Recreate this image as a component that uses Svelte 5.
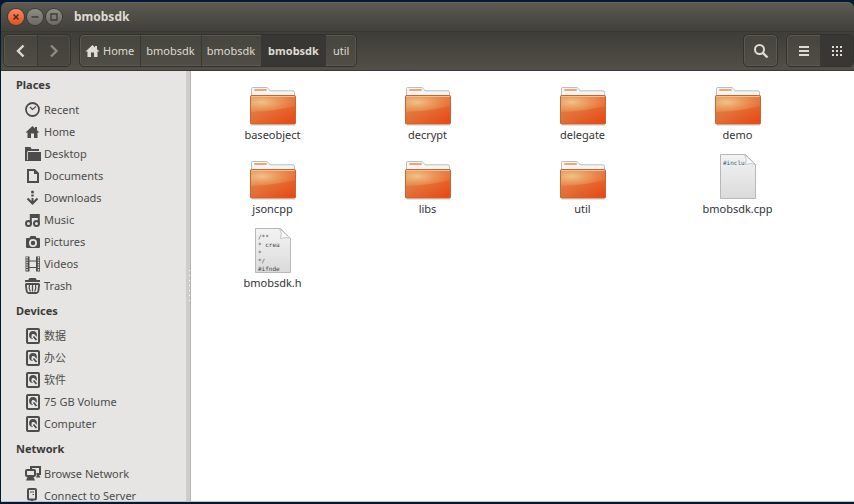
<script>
  const groups = [
    { title: 'Places', items: [
      ['clock', 'Recent'], ['home', 'Home'], ['folder', 'Desktop'], ['doc', 'Documents'],
      ['download', 'Downloads'], ['music', 'Music'], ['camera', 'Pictures'], ['film', 'Videos'], ['trash', 'Trash']
    ] },
    { title: 'Devices', items: [
      ['disk', '数据'], ['disk', '办公'], ['disk', '软件'], ['disk', '75 GB Volume'], ['disk', 'Computer']
    ] },
    { title: 'Network', items: [['network', 'Browse Network'], ['server', 'Connect to Server']] }
  ];
  const crumbs = ['Home', 'bmobsdk', 'bmobsdk', 'bmobsdk', 'util'];
  const current = 3;
  const files = [
    { name: 'baseobject' }, { name: 'decrypt' }, { name: 'delegate' }, { name: 'demo' },
    { name: 'jsoncpp' }, { name: 'libs' }, { name: 'util' },
    { name: 'bmobsdk.cpp', lines: ['#inclu'] },
    { name: 'bmobsdk.h', lines: ['/**', '* crea', '*', '*/', '#ifnde'] }
  ];
</script>

{#snippet icon(name)}
  <svg class="icon" viewBox="0 0 16 16" width="16" height="16" aria-hidden="true">
    {#if name === 'clock'}
      <circle cx="7.500" cy="7.500" r="6.500" fill="none" stroke="currentColor" stroke-width="1.8" />
      <path d="M5 5 7.500 7.500 11 4.500" fill="none" stroke="currentColor" stroke-width="1.2" />
    {:else if name === 'home'}
      <path d="M7.500 2 .5 8.400h2V14h3.500V9.500h3V14h3.500V8.400h2L12 6.200V3h-2v1.400Z" fill="currentColor" />
    {:else if name === 'folder'}
      <path d="M0 1h5.500l1 2H14v2H3v10H0Z" fill="currentColor" />
      <path d="M3 6h13v9H3V6Z" fill="currentColor" />
      <path d="M2.500 5.500V14" stroke="#e6e5e3" stroke-width=".8" />
    {:else if name === 'doc'}
      <path d="M3 2h6.500L13 5.500V14H3Z" fill="none" stroke="currentColor" stroke-width="2" />
      <path d="M9 2v4h4Z" fill="currentColor" />
    {:else if name === 'download'}
      <circle cx="7.500" cy="2" r="1.500" fill="currentColor" />
      <path d="M6.300 4.500h2.400v2H6.300Z" fill="currentColor" />
      <path d="M7.500 8v4M2.500 8.500l5 5 5-5" fill="none" stroke="currentColor" stroke-width="2" />
    {:else if name === 'music'}
      <path d="M5.800 11.500V3h8v8.500M6 5h7.500" fill="none" stroke="currentColor" stroke-width="2" />
      <circle cx="3.500" cy="11.500" r="2.500" fill="none" stroke="currentColor" stroke-width="2" />
      <circle cx="11.500" cy="11.500" r="2.500" fill="none" stroke="currentColor" stroke-width="2" />
    {:else if name === 'camera'}
      <path fill-rule="evenodd" d="M5.500 2h5l1 2H14q1 0 1 1v8q0 1-1 1H2q-1 0-1-1V5q0-1 1-1h2.500ZM8 5a4 4 0 1 0 0 8 4 4 0 0 0 0-8Z" fill="currentColor" />
      <circle cx="8" cy="9" r="2.200" fill="currentColor" />
    {:else if name === 'film'}
      <path d="M2.500 .5v15M13 .5v15" stroke="currentColor" stroke-width="4" />
      <path d="M2 1v14M13.500 1v14" stroke="#e6e5e3" stroke-width="1.400" stroke-dasharray="1.400 1" />
      <path d="M4 5h8M4 11.500h8" stroke="currentColor" stroke-width="1.200" />
    {:else if name === 'trash'}
      <path d="M4 2.500 5 1h5l1 1.500M0 3h15" fill="none" stroke="currentColor" stroke-width="1.800" />
      <path d="M1.500 6h12q.8 0 .5 2l-.5 4q-.4 3-2 3h-8q-1.600 0-2-3L1 8q-.3-2 .5-2Z" fill="none" stroke="currentColor" stroke-width="1.800" />
      <path d="M4.500 6.500q-1 3.500.8 7M7.500 6.500v7M10.500 6.500q1 3.500-.8 7" fill="none" stroke="currentColor" stroke-width="1.200" />
    {:else if name === 'disk'}
      <rect x="2" y="1" width="12" height="14" rx="1" fill="none" stroke="currentColor" stroke-width="2" />
      <circle cx="8" cy="7" r="3.900" fill="currentColor" />
      <path d="M7.500 7.500 11.500 11.500" stroke="#e6e5e3" stroke-width="4" />
      <circle cx="8" cy="7.200" r="1.300" fill="#e6e5e3" />
      <path d="m8.500 8.500 3 3.500" stroke="currentColor" stroke-width="1.800" />
    {:else if name === 'network'}
      <path d="M6 4V1h9v7h-3.500" fill="none" stroke="currentColor" stroke-width="2" />
      <rect x="1" y="4" width="9" height="6" rx="1" fill="#e6e5e3" stroke="currentColor" stroke-width="2" />
      <path d="M2.500 11h6l1.500 3.500H1ZM12 9h2l1.500 2.500H11Z" fill="currentColor" />
    {:else if name === 'server'}
      <rect x="3" y="1" width="8" height="10.500" rx="1" fill="none" stroke="currentColor" stroke-width="2" />
      <path d="M5 4h4M7.500 6.500h1.500" stroke="currentColor" />
      <path d="M7 12v2M3.500 15h7" stroke="currentColor" stroke-width="2" />
    {:else if name === 'back'}
      <path d="M10.500 2.500 5 8l5.500 5.500" fill="none" stroke="currentColor" stroke-width="2.400" />
    {:else if name === 'forward'}
      <path d="M5 2.500 10.500 8 5 13.500" fill="none" stroke="currentColor" stroke-width="2.400" />
    {:else if name === 'search'}
      <circle cx="6.500" cy="6.500" r="4.500" fill="none" stroke="currentColor" stroke-width="2" />
      <path d="m9.800 9.800 4.700 4.700" stroke="currentColor" stroke-width="2.400" />
    {:else if name === 'list'}
      <path d="M3 4h10M3 8h10M3 12h10" stroke="currentColor" stroke-width="2" />
    {:else if name === 'grid'}
      <path d="M3 4h10M3 8h10M3 12h10" stroke="currentColor" stroke-width="2" stroke-dasharray="2 2" />
    {/if}
  </svg>
{/snippet}

<div class="desktop">
  <div class="window">
    <header class="titlebar">
      <button class="wm close" aria-label="Close"><svg width="16" height="16" viewBox="0 0 16 16"><path d="m5.500 5.500 5 5m0-5-5 5" stroke="#56261a" stroke-width="1.500" /></svg></button>
      <button class="wm" aria-label="Minimize"><svg width="16" height="16" viewBox="0 0 16 16"><path d="M4.500 8h7" stroke="#3c3b37" stroke-width="1.300" /></svg></button>
      <button class="wm" aria-label="Maximize"><svg width="16" height="16" viewBox="0 0 16 16"><path d="M5 5h6v6H5Z" fill="none" stroke="#3c3b37" stroke-width="1.300" /></svg></button>
      <h1>bmobsdk</h1>
    </header>
    <div class="toolbar">
      <div class="group">
        <button class="tool" aria-label="Back">{@render icon('back')}</button>
        <button class="tool dim" aria-label="Forward">{@render icon('forward')}</button>
      </div>
      <nav class="group path" aria-label="Path">
        {#each crumbs as crumb, i}
          <button class="crumb" class:active={i === current}>
            {#if i === 0}{@render icon('home')}{/if}<span>{crumb}</span>
          </button>
        {/each}
      </nav>
      <div class="group"><button class="tool" aria-label="Search">{@render icon('search')}</button></div>
      <div class="group views">
        <button class="tool" aria-label="List view">{@render icon('list')}</button>
        <button class="tool active" aria-label="Icon view">{@render icon('grid')}</button>
      </div>
    </div>
    <div class="body">
      <aside>
        {#each groups as group}
          <h2>{group.title}</h2>
          <ul>
            {#each group.items as [glyph, label]}
              <li><a href="#{label}">{@render icon(glyph)}<span>{label}</span></a></li>
            {/each}
          </ul>
        {/each}
      </aside>
      <div class="handle"></div>
      <main>
        {#each files as file}
          <button class="file">
            <svg width="48" height="48" viewBox="0 0 48 48" aria-hidden="true">
              {#if file.lines}
                <path d="M6.500 1.500h25l10 10v34h-35Z" fill="url(#paper)" stroke="#b8b8b8" />
                {#each file.lines as line, i}
                  <text x="9" y={12 + i * 8} class:code={file.lines.length === 1}>{line}</text>
                {/each}
                <path d="M30.500 1.500q3 5 1 10 6-2 10 0Z" fill="#f7f7f7" stroke="#bdbdbd" stroke-width=".8" />
              {:else}
                <path d="M2.500 18V9.500q0-1 1-1H17q1.500 0 2.500 1.300l1.500 2H44q1.500 0 1.500 1.500V18Z" fill="#f5f5f4" stroke="#b9bec0" />
                <path d="M6 11h11" stroke="#f3a47b" stroke-width="2" stroke-linecap="round" />
                <path d="M3 46h43" stroke="#ccc" />
                <rect x="1.500" y="16.500" width="45" height="28.500" rx="1" fill="url(#orange)" stroke="#c56636" />
                <path d="M2 17h44v10Q28 32 2 33Z" fill="url(#shine)" />
                <path d="M2.500 17.500h43" stroke="#f5bd91" />
              {/if}
            </svg>
            <span>{file.name}</span>
          </button>
        {/each}
      </main>
    </div>
  </div>
  <svg class="defs" width="0" height="0" aria-hidden="true">
    <defs>
      <linearGradient id="paper" x2="0" y2="1"><stop stop-color="#f3f3f3" /><stop offset="1" stop-color="#dadada" /></linearGradient>
      <linearGradient id="orange" x2=".8" y2="1"><stop stop-color="#dc8d50" /><stop offset=".55" stop-color="#e36f35" /><stop offset="1" stop-color="#e84b18" /></linearGradient>
      <radialGradient id="shine" cx=".25" cy=".4" r=".75"><stop stop-color="#f7d9a0" stop-opacity=".75" /><stop offset="1" stop-color="#f5a060" stop-opacity=".2" /></radialGradient>
    </defs>
  </svg>
</div>

<style>
  .desktop {
    box-sizing: border-box;
    height: 100vh;
    padding: 2px 0 2px 1px;
    background: #021a33;
    font: 11px/16px "Noto Sans", "Noto Sans CJK SC", sans-serif;
    color: #3c3b37;
    overflow: hidden;
  }
  button { font: inherit; color: inherit; border: 0; margin: 0; padding: 0; background: none; }
  .icon { flex: none; display: block; }
  .defs { position: absolute; }
  .window { height: 100%; display: flex; flex-direction: column; border-radius: 6px 6px 0 0; overflow: hidden; }
  .titlebar {
    flex: none;
    box-sizing: border-box;
    height: 29px;
    display: flex;
    align-items: center;
    gap: 3px;
    padding-left: 7px;
    background: linear-gradient(#5c5a51, #403f3a);
    border-top: 1px solid #6b685e;
    color: #dfdbd2;
  }
  h1 { margin: 0 0 0 9px; font-size: 12px; line-height: 16px; font-weight: 700; }
  .wm { width: 16px; height: 16px; border-radius: 50%; background: linear-gradient(#8f8d85, #6b6962); box-shadow: 0 0 0 1px #3b3a35; }
  .wm svg { display: block; }
  .close { background: linear-gradient(#f58a62, #e2501f); }
  .toolbar {
    flex: none;
    box-sizing: border-box;
    height: 40px;
    display: flex;
    gap: 8px;
    padding: 2px 0 3px 2px;
    background: linear-gradient(#3e3d38, #524f47);
    border-top: 1px solid #393833;
    border-bottom: 1px solid #3a3935;
    color: #dfdbd2;
  }
  .group {
    display: flex;
    box-sizing: border-box;
    border: 1px solid #33322e;
    border-radius: 5px;
    background: linear-gradient(#45443e, #504e46);
    box-shadow: inset 0 0 0 1px #5a584f;
    overflow: hidden;
  }
  .path { margin-right: auto; }
  .tool { width: 33px; display: flex; align-items: center; justify-content: center; }
  .tool + .tool, .crumb + .crumb { border-left: 1px solid #393833; }
  .dim { color: #8f8b82; background: #403f3a66; }
  .tool.active, .crumb.active { background: #383733; }
  .crumb { display: flex; align-items: center; gap: 2px; padding: 0 6px 0 5px; }
  .crumb.active { font-weight: 700; padding: 0 6px; }
  .crumb:last-child { padding: 0 7px; }
  .body { flex: 1; min-height: 0; display: flex; border-bottom: 1px solid #bfc3c4; background: #fff; }
  aside { flex: 0 0 185px; background: #e6e5e3; overflow: hidden; }
  h2 { margin: 0; padding: 6px 15px; font-size: 11px; line-height: 16px; font-weight: 700; }
  ul { margin: 0; padding: 0; list-style: none; }
  a { display: flex; align-items: center; gap: 3px; height: 22px; padding-left: 24px; color: #4c4c4c; text-decoration: none; white-space: nowrap; }
  .handle { flex: 0 0 4px; background: #cecdca; border-right: 1px solid #b5b3af; display: flex; align-items: center; justify-content: flex-end; }
  .handle::after { content: ""; width: 1px; height: 32px; background: repeating-linear-gradient(#fff 0 1px, #cecdca 1px 5px); }
  main {
    flex: 1;
    min-width: 0;
    display: grid;
    grid-template-columns: repeat(auto-fill, 155px);
    grid-auto-rows: 74px;
    padding: 8px 0 0 4px;
    overflow: hidden;
  }
  .file { display: flex; flex-direction: column; align-items: center; color: #333; }
  .file svg { display: block; }
  text { font: 6px "DejaVu Sans Mono", monospace; fill: #444; }
  .code { fill: #355a78; }
</style>
